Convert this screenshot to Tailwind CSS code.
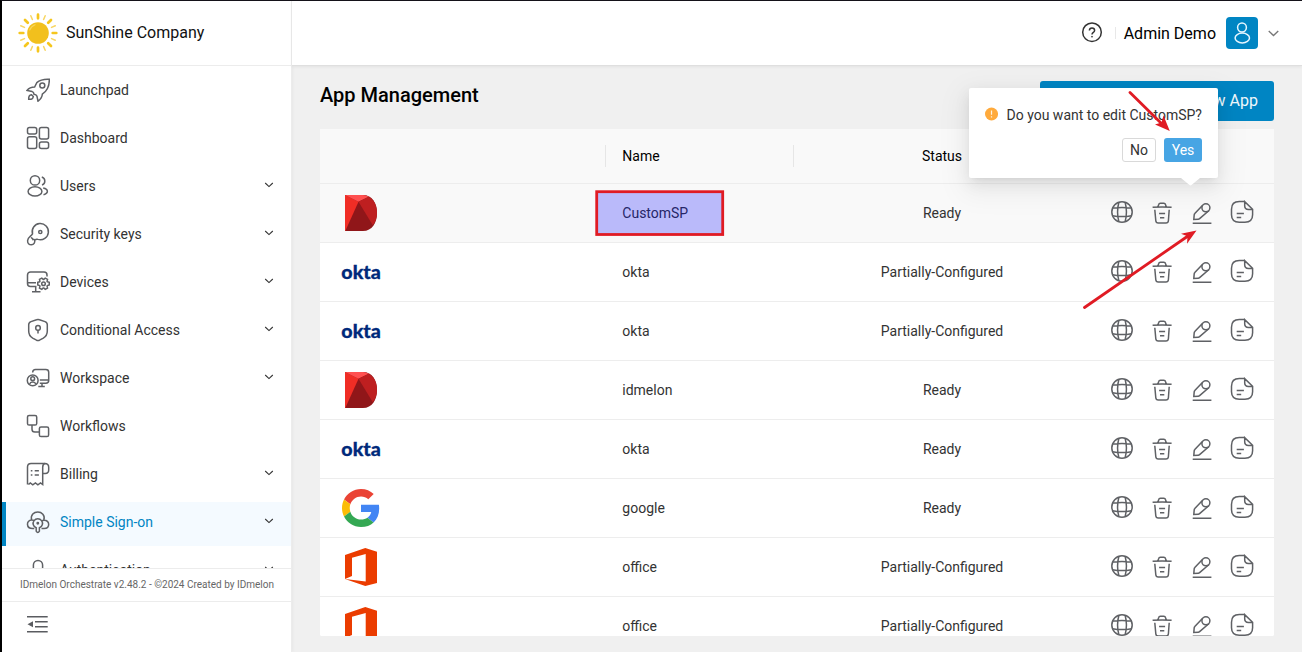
<!DOCTYPE html>
<html lang="en">
<head>
<meta charset="utf-8">
<title>App Management</title>
<script src="https://cdn.jsdelivr.net/npm/@tailwindcss/browser@4"></script>
</head>
<body class="h-[652px] w-[1302px] overflow-hidden bg-[#f0f0f0] font-['Roboto',sans-serif] text-sm text-[#333]">
<svg class="hidden">
  <symbol id="chev" viewBox="0 0 12 12"><path d="M2.200 4 6 7.600l3.800-3.600" fill="none" stroke="currentColor" stroke-width="1.100"/></symbol>
  <symbol id="rocket" viewBox="0 0 24 24"><path d="M23.300 1.200C18 .9 13.700 2 10.800 4.600L8.600 9C5.500 9 2.800 10.200 1 12.400l5.200 1.200c1.400.4 1.700 1.600 1.800 2.600.9.200 2.600.5 3 2.100l1 4.900c2.300-1.800 4.200-4.200 4.300-7C20.300 13.600 23.500 8 23.300 1.200Z"/><circle cx="16.300" cy="7.600" r="2.500"/><path d="M5.500 16.800c-2 .2-3 1.600-2.800 4.500 3 .3 4.400-.7 4.600-2.800Z"/></symbol>
  <symbol id="dash" viewBox="0 0 24 24"><rect x="1.500" y="1.500" width="9.200" height="6.500" rx="2"/><rect x="13.400" y="1.500" width="9.200" height="11.500" rx="2"/><rect x="1.500" y="10.700" width="9.200" height="11.800" rx="2"/><rect x="13.400" y="15.900" width="9.200" height="6.600" rx="2"/></symbol>
  <symbol id="users" viewBox="0 0 24 24"><circle cx="9" cy="6.400" r="4.700"/><ellipse cx="9" cy="17.400" rx="6.900" ry="4.700"/><path d="M15.800 3a4.200 4.200 0 0 1 .2 8M17.200 14c5.500 1 5.500 5.400.3 6.700"/></symbol>
  <symbol id="key" viewBox="0 0 24 24"><path d="M6.500 11.800A8.100 8.100 0 1 1 12 17.400c-1.400-.5-2.200-.2-3.300.8.400 2.600-.8 4.500-3.300 4.600-2.400 0-4-1.700-3.800-4.200.1-2 1.200-3.100 2.600-4.300 1-.8 1.800-1.500 2.300-2.500ZM5.200 15.200c.4 1 1.400 1.300 1.700 2.400.8-.3 1.700 0 1.800.6"/><circle cx="14.300" cy="10" r="1.600"/></symbol>
  <symbol id="dev" viewBox="0 0 24 24"><path d="M21 6.500V5a3 3 0 0 0-3-3H4.500a3 3 0 0 0-3 3v8.500a3 3 0 0 0 3 3h6M1.500 12.700H10M9.700 16.500v5M6 21.700h8.500"/><g transform="translate(17.500 13.700)"><path d="M3.860-1.890 5.750-1.330V1.330L3.860 1.890 3.560 2.400 4.020 4.310 1.720 5.640.3 4.290h-.6L-1.720 5.640-4.020 4.310-3.560 2.400-3.860 1.890-5.750 1.330V-1.330L-3.860-1.890-3.560-2.400-4.020-4.310-1.720-5.640-.3-4.290h.6L1.720-5.640 4.020-4.310 3.560-2.400Z"/><circle r="1.800"/></g></symbol>
  <symbol id="shield" viewBox="0 0 24 24"><path d="M10.500 1.700q1.500-.6 3 0L19 3.600q2.300.8 2.300 3.200V13q0 4.800-4 7.200l-3.800 2q-1.500.7-3 0l-3.800-2q-4-2.400-4-7.200V6.800q0-2.400 2.300-3.200Z"/><circle cx="12" cy="9.900" r="2.300"/><path d="M12 12.200v3.300"/></symbol>
  <symbol id="work" viewBox="0 0 24 24"><circle cx="6.700" cy="14.400" r="5.400"/><circle cx="6.700" cy="12.700" r="1.900"/><path d="M3.700 18c.7-2.600 5.300-2.600 6 0M6.700 6.600V6.300q0-2.700 2.800-2.700h10.300q2.900 0 2.900 2.700v8.300q0 2.700-2.900 2.700H13.800M13.800 13.900h8.900M16 17.400v3M12.300 20.500h6.500"/></symbol>
  <symbol id="flow" viewBox="0 0 24 24"><rect x="1.500" y="1.500" width="9.200" height="9.500" rx="1.600"/><rect x="13.400" y="13" width="9.200" height="9.500" rx="1.600"/><path d="M6 11v4.200q0 2.800 2.800 2.800h4.600"/></symbol>
  <symbol id="bill" viewBox="0 0 24 24"><path d="M1.500 22.500V5q0-3.600 3.600-3.600h13.700q3.900 0 3.900 3.900v2.800q0 3.400-3.400 3.400H16.700M19 1.400q-2.300.5-2.300 3.800V22.500l-2.200-1.600-2.600 1.900-2.500-1.900-2.600 1.900-2.500-1.900-1.800 1.600M4.800 8.700h1.600M8.700 8.700h4.200M4.800 13h1.600M8.700 13h4.200"/></symbol>
  <symbol id="cloud" viewBox="0 0 24 24"><path d="M8.300 18.600H6.500C0 18.600-.1 10.300 5.600 10 4.300 4.900 8 1.900 11.800 1.900s7.700 3.200 6 8.300c6.400-.3 6.500 8.100.3 8.400h-2.600M6 10.100q1.500.1 2.300.8M18 10.200q-1.400.1-2.200.9M10.200 17.800a4.700 4.700 0 1 1 3.200 0v3.300q-1.600 2.700-3.200 0Z"/><circle cx="11.800" cy="13.300" r=".7"/></symbol>
  <symbol id="auth" viewBox="0 0 24 24"><path d="M7.400 12V7a4.600 4.600 0 0 1 9.200 0v5"/></symbol>
  <symbol id="globe" viewBox="0 0 24 24"><circle cx="12" cy="12" r="10.200"/><path d="M8.900 2.200Q6.200 12 8.900 21.800M15.100 2.200Q17.800 12 15.100 21.800M2.500 8Q12 6.900 21.500 8M2.500 15.700Q12 17.500 21.500 15.700"/></symbol>
  <symbol id="trash" viewBox="0 0 24 24"><path d="M2.600 7.300Q12 6.500 21.600 7.300M7.900 6.900l.7-2.200q.4-1.500 1.800-1.500h3.400q1.400 0 1.800 1.500l.7 2.200M4.800 9.800l1 11q.2 2.300 2.500 2.300h7.600q2.300 0 2.500-2.300l.8-11M9.100 13.500h6M10 17.800h4.300"/></symbol>
  <symbol id="pencil" viewBox="0 0 24 24"><circle cx="15.900" cy="7.800" r="4"/><path d="M12.900 5.100 4.800 13.600q-.5.500-.6 1.300L3.800 19.400l4.500-.2q.8 0 1.300-.6L18.800 10.700M2.700 23.300h18.700"/></symbol>
  <symbol id="doc" viewBox="0 0 24 24"><path d="M14.700 1.600H9.300Q1.500 1.600 1.500 9.200v5.600q0 7.400 7.800 7.400h5.600q7.700 0 7.700-7.400V9.300L14.700 1.600v4.200q0 3.700 3.700 3.700h4.200M6.700 13.500h7.200M6.700 17.500h4.500"/></symbol>
  <symbol id="dlogo" viewBox="0 0 32 36"><path d="M0 0H18C27 0 32 8 32 18S27 36 18 36H0Z" fill="#901619"/><path d="M0 0 13.500 6.700.3 36H0Z" fill="#f02d25"/><path d="M0 0H18Q21 0 23.700 1.800L13.500 6.700Z" fill="#ff5050"/><path d="M13.500 6.700 23.700 1.800C29.500 5 32 11 32 18c0 5-1.500 9-4.200 12.200Z" fill="#be1f20"/></symbol>
  <symbol id="okta" viewBox="0 0 40 20"><text x="0.300" y="17" textLength="39.500" lengthAdjust="spacingAndGlyphs" font-family="Lato, sans-serif" font-weight="900" font-size="18.500" fill="#00297a" stroke="#00297a" stroke-width=".3">okta</text></symbol>
  <symbol id="google" viewBox="0 0 48 48"><path fill="#EA4335" d="M24 9.500c3.540 0 6.710 1.220 9.210 3.600l6.850-6.850C35.900 2.380 30.470 0 24 0 14.620 0 6.510 5.380 2.560 13.220l7.980 6.190C12.430 13.720 17.740 9.500 24 9.500z"/><path fill="#4285F4" d="M46.980 24.550c0-1.570-.15-3.090-.38-4.550H24v9.020h12.940c-.58 2.960-2.260 5.480-4.780 7.180l7.730 6c4.510-4.180 7.090-10.360 7.090-17.650z"/><path fill="#FBBC05" d="M10.530 28.590c-.48-1.450-.76-2.990-.76-4.590s.27-3.140.76-4.590l-7.980-6.190C.92 16.460 0 20.120 0 24c0 3.880.92 7.540 2.560 10.780l7.970-6.190z"/><path fill="#34A853" d="M24 48c6.480 0 11.930-2.130 15.890-5.810l-7.730-6c-2.150 1.450-4.920 2.300-8.160 2.300-6.260 0-11.570-4.220-13.470-9.910l-7.980 6.190C6.510 42.620 14.620 48 24 48z"/></symbol>
  <symbol id="office" viewBox="0 0 32 38"><path fill="#eb3c00" d="M0 7 20.300 0 32 3.700V35L20.300 38 0 31 20.700 33.500V6L7 9.700V28L0 31Z"/></symbol>
</svg>

<div class="relative flex h-full border-t border-l-2 border-t-[#15131a] border-l-black">
  <aside class="flex w-[290px] shrink-0 flex-col border-r border-[#ececec] bg-white shadow-[1px_0_3px_rgba(0,0,0,0.04)]">
    <div class="flex h-[65px] shrink-0 items-center gap-2 border-b border-[#ececec] pl-4 text-base text-[#111]">
      <svg class="size-10" viewBox="-20 -20 40 40">
        <g stroke="#f5c61d" stroke-width="2.700" stroke-linecap="round"><path d="M0-18.300v3.600M0 18.300v-3.600M-18.300 0h3.600M18.300 0h-3.600M-13-13l2.800 2.800M13-13l-2.800 2.800M-13 13l2.800-2.800M13 13l-2.800-2.800"/></g>
        <g stroke="#f8d662" stroke-width="1.500" stroke-linecap="round"><path d="M-7.200-17.300-5.600-13.500M7.200-17.300 5.600-13.500M-7.200 17.300-5.600 13.500M7.200 17.300 5.600 13.500M-17.300-7.200-13.500-5.600M17.300-7.200 13.500-5.600M-17.300 7.200-13.500 5.600M17.300 7.200 13.500 5.600"/></g>
        <circle r="10.800" fill="#f2c01d"/><path d="M-8.300-3A9 9 0 0 1-3-8.300" fill="none" stroke="#f7d65c" stroke-width="1.200" stroke-linecap="round"/>
      </svg>
      <span>SunShine Company</span>
    </div>
    <nav id="nav" class="flex min-h-0 flex-1 flex-col gap-1 overflow-hidden pt-1"></nav>
    <div class="flex h-[33px] shrink-0 items-center border-t border-[#ececec] pl-[18px] text-[10px] whitespace-nowrap text-[#666]">IDmelon Orchestrate v2.48.2 - ©2024 Created by IDmelon</div>
    <div class="h-[51px] shrink-0 border-t border-[#ececec] pt-[13px] pl-[25px]">
      <svg class="h-[18px] w-[21px]" viewBox="0 0 21 18" stroke="#5a5c60" stroke-width="1.500"><path d="M0 1.700h20.700M8 6.700h12.700M8 11.700h12.700M0 16.700h20.700"/><path d="M.5 9.200 6 6.200v6Z" fill="#5a5c60" stroke="none"/></svg>
    </div>
  </aside>

  <div class="flex min-w-0 flex-1 flex-col">
    <header class="flex h-[65px] shrink-0 items-center justify-end border-b border-[#dfdfdf] bg-white pr-[21px] shadow-[0_1px_3px_rgba(0,0,0,0.06)]">
      <svg class="size-[22px]" viewBox="0 0 22 22" fill="none" stroke="#333" stroke-width="1.500"><circle cx="11" cy="10.200" r="9.300"/><path d="M8.400 8.500c0-3.500 5.200-3.400 5.200-.1 0 2-2.600 1.900-2.600 4.100"/><circle cx="11" cy="14.700" r=".5" fill="#333" stroke-width=".8"/></svg>
      <div class="ml-3 h-3 w-px bg-[#e8e8e8]"></div>
      <span class="ml-2 pt-0.5 text-base text-black">Admin Demo</span>
      <div class="ml-2.5 flex size-8 items-center justify-center rounded bg-[#0085c3]">
        <svg class="size-6" viewBox="0 0 24 24" fill="none" stroke="#e6f6ff" stroke-width="1.500"><circle cx="12" cy="6.500" r="4.400"/><ellipse cx="12.300" cy="17" rx="7.200" ry="4.900"/></svg>
      </div>
      <svg class="ml-2 size-[15px] text-[#777]"><use href="#chev"/></svg>
    </header>
    <main class="flex min-h-0 flex-1 flex-col pt-[15px] pr-7 pb-4 pl-7">
      <div class="flex h-12 shrink-0 justify-between">
        <h1 class="text-xl font-medium text-black">App Management</h1>
        <button class="flex h-10 w-[234px] items-center justify-end rounded-[3px] bg-[#0085c3] pr-4 text-base text-[#f0f8fc]">New App</button>
      </div>
      <div class="flex min-h-0 flex-1 flex-col overflow-hidden rounded-b-[2px] bg-white">
        <div class="grid h-[55px] shrink-0 grid-cols-[286px_188px_296px_184px] items-center border-b border-[#ededed] bg-[#f9f9f9] text-black">
          <div class="h-[22px] border-r border-[#e6e6e6]"></div>
          <div class="flex h-[22px] items-center border-r border-[#e6e6e6] pl-[16.300px]">Name</div>
          <div class="text-center">Status</div>
          <div></div>
        </div>
        <div id="rows"></div>
      </div>
    </main>
  </div>

  <!-- Edit confirmation -->
  <div class="absolute top-[87px] left-[967px] h-[90px] w-[249px] rounded-[2px] bg-white px-4 pt-4 shadow-[0_3px_6px_-4px_rgba(0,0,0,0.12),0_6px_16px_rgba(0,0,0,0.08),0_9px_28px_8px_rgba(0,0,0,0.05)]">
    <div class="flex items-center gap-2">
      <svg class="size-3.5 -translate-y-px" viewBox="0 0 14 14"><circle cx="7" cy="7" r="7" fill="#ffaa3c"/><path d="M7 3.200v4.600M7 9.300v1.400" stroke="#fff2df" stroke-width="1.300"/></svg>
      <span class="pl-[0.500px] leading-[22px] whitespace-nowrap">Do you want to edit CustomSP?</span>
    </div>
    <div class="mt-3 flex justify-end gap-2">
      <button class="h-6 w-[34px] rounded-[3px] border border-[#d9d9d9] bg-white">No</button>
      <button class="h-6 w-[38px] rounded-[3px] bg-[#47a5e4] text-white">Yes</button>
    </div>
    <svg class="absolute top-[90px] left-[212px] h-2 w-[19px]" viewBox="0 0 19 8"><path d="M0 0h19L10.500 7q-1 .8-2 0Z" fill="#fff"/></svg>
  </div>

  <!-- Annotations -->
  <svg class="absolute top-[184px] left-[588px] h-[56px] w-[140px]" viewBox="590 185 140 56"><rect x="596.700" y="191.700" width="126" height="42.800" fill="#0000ff" fill-opacity=".25" stroke="#e01b24" stroke-width="2.800"/></svg>
  <svg class="absolute top-[84px] left-[1068px] h-[230px] w-[140px]" viewBox="1070 85 140 230" fill="#e01b24" stroke="#e01b24">
    <path d="M1130 92.500 1162 124M1084.500 307.500 1188 236" fill="none" stroke-width="2.800" stroke-linecap="round"/>
    <path stroke="none" d="M1169.800 131 1155 124.500 1161.500 122.500 1163.500 115.500ZM1196.500 230.500 1187 243.800 1187.500 236.200 1181 233.800Z"/>
  </svg>
</div>

<script>
const items = [['rocket','Launchpad',0],['dash','Dashboard',0],['users','Users',1],['key','Security keys',1],['dev','Devices',1],['shield','Conditional Access',1],['work','Workspace',1],['flow','Workflows',0],['bill','Billing',1],['cloud','Simple Sign-on',1],['auth','Authentication',1]];
document.getElementById('nav').innerHTML = items.map(([icon, label, sub]) => {
  const on = label === 'Simple Sign-on';
  return `<div class="flex h-11 shrink-0 items-center border-l-4 pr-4 pb-1 pl-5 ${on ? 'border-[#0085c3] bg-[#f4faff] text-[#0085c3]' : 'border-transparent'}">
    <svg class="size-6 fill-none stroke-[#5f6165] stroke-[1.5]"><use href="#${icon}"/></svg>
    <span class="ml-2.5 flex-1">${label}</span>
    ${sub ? '<svg class="size-3 -translate-y-px text-[#333]"><use href="#chev"/></svg>' : ''}</div>`;
}).join('');

const logos = {
  dlogo: '<svg class="h-9 w-8"><use href="#dlogo"/></svg>',
  okta: '<svg class="h-5 w-10"><use href="#okta"/></svg>',
  google: '<svg class="size-[38px]"><use href="#google"/></svg>',
  office: '<svg class="h-[38px] w-8"><use href="#office"/></svg>'
};
const rows = [['dlogo','CustomSP','Ready'],['okta','okta','Partially-Configured'],['okta','okta','Partially-Configured'],['dlogo','idmelon','Ready'],['okta','okta','Ready'],['google','google','Ready'],['office','office','Partially-Configured'],['office','office','Partially-Configured']];
document.getElementById('rows').innerHTML = rows.map(([logo, name, status], i) =>
  `<div class="grid h-[59px] grid-cols-[286px_188px_296px_184px] items-center border-b border-[#ededed] ${i ? 'bg-white' : 'bg-[#f9f9f9]'}">
    <div class="pl-4"><div class="flex w-[50px] justify-center">${logos[logo]}</div></div>
    <div class="pl-[16.300px]">${name}</div>
    <div class="text-center">${status}</div>
    <div class="flex gap-4 pb-0.5 pl-5">${['globe','trash','pencil','doc'].map(k => `<svg class="size-6 fill-none stroke-[#5f6165] stroke-[1.5]"><use href="#${k}"/></svg>`).join('')}</div>
  </div>`).join('');
</script>
</body>
</html>
